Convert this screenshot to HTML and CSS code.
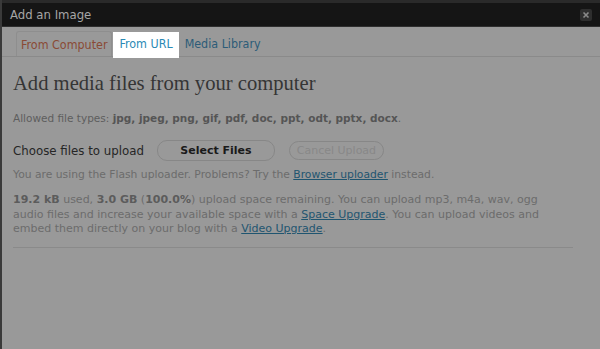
FILE: index.html
```html
<!DOCTYPE html>
<html>
<head>
<meta charset="utf-8">
<link rel="stylesheet" href="styles.css">
</head>
<body>
<div class="dialog">
  <div class="titlebar">
    <span class="title">Add an Image</span>
    <span class="close"><svg width="12" height="12" viewBox="0 0 12 12"><path d="M3.5 3.5 L8.5 8.5 M8.5 3.5 L3.5 8.5" stroke="#8a8a8a" stroke-width="1.6"/></svg></span>
  </div>
  <div class="tabs">
    <span class="tab current">From Computer</span>
    <span class="tab spot">From URL</span>
    <span class="tab lib">Media Library</span>
  </div>
  <div class="content">
    <h3 class="heading">Add media files from your computer</h3>
    <p class="types">Allowed file types: <b>jpg, jpeg, png, gif, pdf, doc, ppt, odt, pptx, docx</b>.</p>
    <div class="choose">
      <span class="label">Choose files to upload</span>
      <span class="btn select">Select Files</span>
      <span class="btn cancel">Cancel Upload</span>
    </div>
    <p class="flash">You are using the Flash uploader. Problems? Try the <a>Browser uploader</a> instead.</p>
    <p class="space"><b>19.2 kB</b> used, <b>3.0 GB</b> (<b>100.0%</b>) upload space remaining. You can upload mp3, m4a, wav, ogg audio files and increase your available space with a <a>Space Upgrade</a>. You can upload videos and embed them directly on your blog with a <a>Video Upgrade</a>.</p>
    <div class="sep"></div>
  </div>
</div>
</body>
</html>
```
FILE: styles.css
```css
html, body { margin: 0; padding: 0; }
body {
  background: #999999;
  font-family: "DejaVu Sans", Verdana, sans-serif;
  width: 600px;
  height: 349px;
  overflow: hidden;
}
.dialog {
  height: 349px;
  border-left: 2px solid #3a3a3a;
  box-sizing: border-box;
}
.titlebar {
  border-top: 3px solid #2a2a2a;
  background: #151515;
  height: 23px;
  border-bottom: 1px solid #2e2e2e;
  display: flex;
  align-items: center;
  justify-content: space-between;
  padding: 0 8px 0 8px;
}
.title {
  color: #a6a6a6;
  font-family: "DejaVu Sans Condensed", "DejaVu Sans", sans-serif;
  font-size: 13px;
}
.close {
  width: 12px;
  height: 12px;
  background: #2e2e2e;
  border-radius: 2px;
  display: flex;
  margin-top: 1px;
}
.tabs {
  margin-top: 4px;
  padding-left: 14px;
  display: flex;
  align-items: flex-end;
  height: 25px;
  border-bottom: 1px solid #8a8a8a;
  font-family: "DejaVu Sans Condensed", "DejaVu Sans", sans-serif;
  font-size: 12.4px;
}
.tab {
  height: 25px;
  line-height: 25px;
  padding: 0 5px;
  box-sizing: border-box;
}
.current {
  color: #8a4a35;
  border: 1px solid #8e8e8e;
  border-bottom: none;
  border-top-left-radius: 3px;
  border-top-right-radius: 3px;
  padding: 0 4px;
}
.spot {
  background: #ffffff;
  color: #2a8ab5;
  height: 26px;
  margin-bottom: -2px;
  margin-left: 1px;
  padding: 0 6px;
  line-height: 23px;
}
.lib { color: #2c5c78; padding-left: 6px; }
.content { padding: 0 11px; }
.heading {
  margin: 14px 0 0 0;
  font-family: "Liberation Serif", "Times New Roman", serif;
  font-weight: normal;
  font-size: 20.6px;
  line-height: 24px;
  color: #353535;
}
.types {
  margin: 16px 0 0 0;
  font-size: 10.5px;
  line-height: 14px;
  color: #5e5e5e;
}
.types b { color: #555; }
.choose {
  margin-top: 15px;
  display: flex;
  align-items: center;
  font-size: 11.8px;
  height: 21px;
}
.label { color: #262626; margin-right: 13px; }
.btn {
  box-sizing: border-box;
  border: 1px solid #878787;
  border-radius: 10px;
  display: flex;
  align-items: center;
  justify-content: center;
  font-size: 11px;
}
.select { width: 118px; height: 21px; font-weight: bold; color: #1a1a1a; }
.cancel { width: 95px; height: 19px; margin-left: 14px; color: #888; }
.flash {
  margin: 7px 0 0 0;
  font-size: 10.75px;
  line-height: 14px;
  color: #6c6c6c;
}
a { color: #1f5570; text-decoration: underline; }
.space {
  margin: 11px 0 0 0;
  font-size: 11px;
  line-height: 14.5px;
  color: #6c6c6c;
  width: 546px;
}
.space b { color: #5c5c5c; }
.sep {
  margin-top: 10px;
  width: 560px;
  border-top: 1px solid #8a8a8a;
}
```
